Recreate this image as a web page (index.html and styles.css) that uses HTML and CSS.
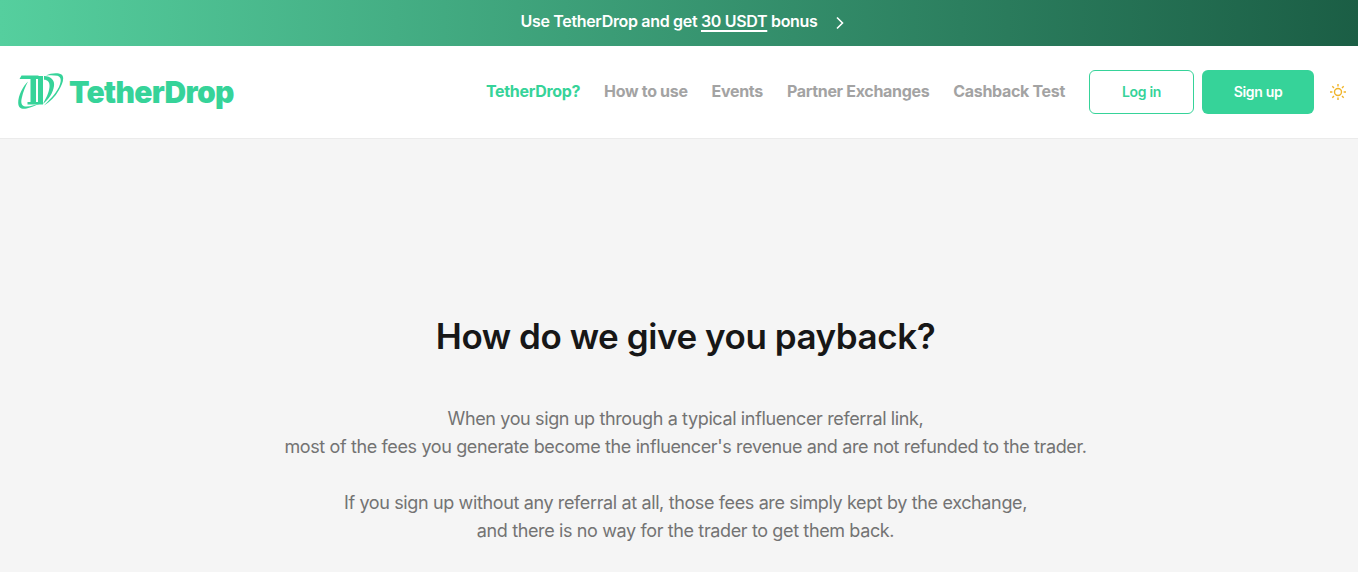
FILE: index.html
```html
<!DOCTYPE html>
<html lang="en">
<head>
    <meta charset="UTF-8">
    <meta name="viewport" content="width=device-width, initial-scale=1.0">
    <title>TetherDrop</title>
    <link rel="stylesheet" href="styles.css">
</head>
<body>
    <a class="promo" href="#">
        <span class="promo-text">Use TetherDrop and get <u>30 USDT</u> bonus</span>
        <svg class="promo-arrow" viewBox="0 0 10 14" width="10" height="14">
            <path d="M2 1.5 7.5 7 2 12.5" fill="none" stroke="currentColor" stroke-width="1.6"></path>
        </svg>
    </a>
    <header class="header">
        <a class="logo" href="#">
            <svg class="logo-mark" viewBox="0 0 46 38" width="46" height="38">
                <path d="M10 8.5C5 13 0 23 .2 30 .5 37 6 36.5 12 34.5 16 33 20 31.5 23 30 18 31.5 12 33.8 7.5 33.5 3 33 2.8 29 3.8 25 5 19 7.5 13 10 8.5Z" fill="currentColor"></path>
                <path d="M28 2.5C33 0 40-.5 43.5 1.5 47 4 44.5 11 41 17 37 24 32 29 26 32.5 31 27 37 22 41 14 43.5 8 43.5 4 39.5 2.8 35.5 2 32 2 28 2.5Z" fill="currentColor"></path>
                <path d="M26 3C33 3 37 7.5 36 13 35 20 31 26 25 31 27.5 26 31 20 31.5 14 32 9 29.5 6.8 26 6.8Z" fill="currentColor"></path>
                <path d="M3.5 2.5H20.5V6H18V29H20V3H25V31.5H9.5V29H12.5V6H1.5Z" fill="currentColor"></path>
            </svg>
            <span class="logo-text">TetherDrop</span>
        </a>
        <nav class="nav">
            <a class="nav-link active" href="#">TetherDrop?</a>
            <a class="nav-link" href="#">How to use</a>
            <a class="nav-link" href="#">Events</a>
            <a class="nav-link" href="#">Partner Exchanges</a>
            <a class="nav-link" href="#">Cashback Test</a>
        </nav>
        <div class="actions">
            <a class="btn btn-outline" href="#">Log in</a>
            <a class="btn btn-fill" href="#">Sign up</a>
            <svg class="theme" viewBox="0 0 16 16" width="16" height="16">
                <circle cx="8" cy="8" r="3.5" fill="none" stroke="currentColor" stroke-width="1.4"></circle>
                <path d="M8 0v2.4M8 13.6V16M0 8h2.4M13.6 8H16M2.3 2.3 4 4M12 12l1.7 1.7M2.3 13.7 4 12M12 4l1.7-1.7" stroke="currentColor" stroke-width="1.4"></path>
            </svg>
        </div>
    </header>
    <main class="main">
        <h1>How do we give you payback?</h1>
        <p>When you sign up through a typical influencer referral link,<br>most of the fees you generate become the influencer's revenue and are not refunded to the trader.</p>
        <p>If you sign up without any referral at all, those fees are simply kept by the exchange,<br>and there is no way for the trader to get them back.</p>
    </main>
</body>
</html>
```
FILE: styles.css
```css
* {
    box-sizing: border-box;
}
html, body {
    height: 100%;
}
body {
    margin: 0;
    font-family: Inter, "Liberation Sans", sans-serif;
    letter-spacing: -0.02em;
    background-color: #f5f5f5;
    overflow: hidden;
}
a {
    text-decoration: none;
}
.promo {
    display: flex;
    justify-content: center;
    align-items: center;
    gap: 17px;
    height: 46px;
    padding-left: 7px;
    color: #fff;
    font-size: 16px;
    font-weight: 600;
    background: linear-gradient(90deg, #55cf9e, #1b5e45);
}
.promo-text {
    margin-bottom: 4px;
}
.promo u {
    text-underline-offset: 3px;
    text-decoration-thickness: 2px;
}
.promo-arrow {
    margin-bottom: 1px;
}
.header {
    display: flex;
    align-items: center;
    height: 93px;
    padding: 0 12px 0 18px;
    background-color: #fff;
    border-bottom: 1px solid #ebebeb;
}
.logo {
    display: flex;
    align-items: center;
    gap: 5px;
    color: #36d399;
}
.logo-text {
    font-size: 30px;
    font-weight: 900;
    letter-spacing: -0.7px;
}
.nav {
    display: flex;
    gap: 24px;
    margin-left: auto;
    padding-bottom: 2px;
}
.nav-link {
    color: #a3a3a3;
    font-size: 16px;
    font-weight: 700;
}
.nav-link.active {
    color: #36d399;
}
.actions {
    display: flex;
    align-items: center;
    margin-left: 24px;
}
.btn {
    display: flex;
    justify-content: center;
    align-items: center;
    height: 44px;
    padding-bottom: 1px;
    border-radius: 6px;
    font-size: 14px;
    font-weight: 600;
}
.btn-outline {
    width: 105px;
    color: #36d399;
    background-color: #fff;
    border: 1px solid #36d399;
}
.btn-fill {
    width: 112px;
    margin-left: 8px;
    color: #fff;
    background-color: #36d399;
}
.theme {
    margin-left: 16px;
    color: #f0b429;
}
.main {
    padding: 175px 0 0 13px;
    text-align: center;
}
h1 {
    margin: 0 0 47px;
    color: #171717;
    font-size: 35px;
    font-weight: 600;
    letter-spacing: -0.44px;
    line-height: 44px;
}
p {
    margin: 0 0 28px;
    color: #737373;
    font-size: 18px;
    letter-spacing: -0.37px;
    line-height: 28px;
}
```
